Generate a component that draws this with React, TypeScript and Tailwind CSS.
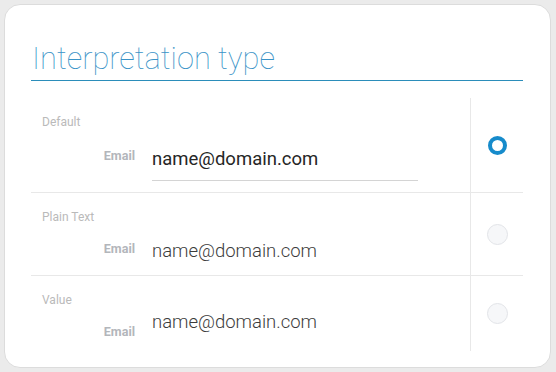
import React from 'react';

type Row = {
  title: string;
  height: string;
  selected: boolean;
  underline: boolean;
  labelOffset: string;
  gap: string;
  valueStyle: string;
  last?: boolean;
};

const rows: Row[] = [
  { title: 'Default', height: 'h-[95px]', selected: true, underline: true, labelOffset: 'mt-[1px]', gap: 'mt-[17px]', valueStyle: 'text-[#262626] font-normal' },
  { title: 'Plain Text', height: 'h-[83px]', selected: false, underline: false, labelOffset: 'mt-[2px]', gap: 'mt-[14px]', valueStyle: 'text-[#3c3c3c] font-light' },
  { title: 'Value', height: 'h-[75px]', selected: false, underline: false, labelOffset: 'mt-[14px]', gap: 'mt-[2px]', valueStyle: 'text-[#3c3c3c] font-light', last: true },
];

function Radio({ checked }: { checked: boolean }) {
  if (checked) {
    return <span className="block w-[19px] h-[19px] rounded-full border-[4px] border-[#168bcb] bg-white" />;
  }
  return <span className="block w-[21px] h-[21px] rounded-full border border-[#e2e4e8] bg-[#f6f7f9]" />;
}

export default function App() {
  return (
    <div className="w-[556px] h-[372px] bg-[#ebebeb] p-[4px]" style={{ fontFamily: 'Roboto, "Noto Sans", sans-serif' }}>
      <div className="h-[364px] w-[547px] bg-white rounded-[16px] border border-[#dcdcdc] pt-[36px] pl-[26px] pr-[27px]">
        <div className="border-b border-[#2b8dba] pb-[3px]">
          <h1 className="text-[30.8px] leading-[36px] font-thin text-[#3a93c7] pl-[1px]">Interpretation type</h1>
        </div>

        <div className="mt-[17px]">
          {rows.map((row) => (
            <div key={row.title} className={`flex ${row.height} ${row.last ? '' : 'border-b border-[#e8e8e8]'}`}>
              <div className="flex-1 pl-[11px] pt-[16px]">
                <div className="text-[12px] leading-[16px] text-[#bababa]">{row.title}</div>
                <div className={`flex items-start ${row.gap}`}>
                  <div className={`w-[93px] text-right text-[12.5px] leading-[16px] font-bold text-[#b3b6bb] ${row.labelOffset}`}>Email</div>
                  <div className="ml-[17px] w-[266px]">
                    <div className={`text-[18.5px] leading-[24px] ${row.valueStyle} ${row.underline ? 'pb-[9px] border-b border-[#d4d4d4]' : ''}`}>
                      name@domain.com
                    </div>
                  </div>
                </div>
              </div>
              <div className="w-[53px] border-l border-[#e8e8e8] flex items-center justify-center">
                <Radio checked={row.selected} />
              </div>
            </div>
          ))}
        </div>
      </div>
    </div>
  );
}
